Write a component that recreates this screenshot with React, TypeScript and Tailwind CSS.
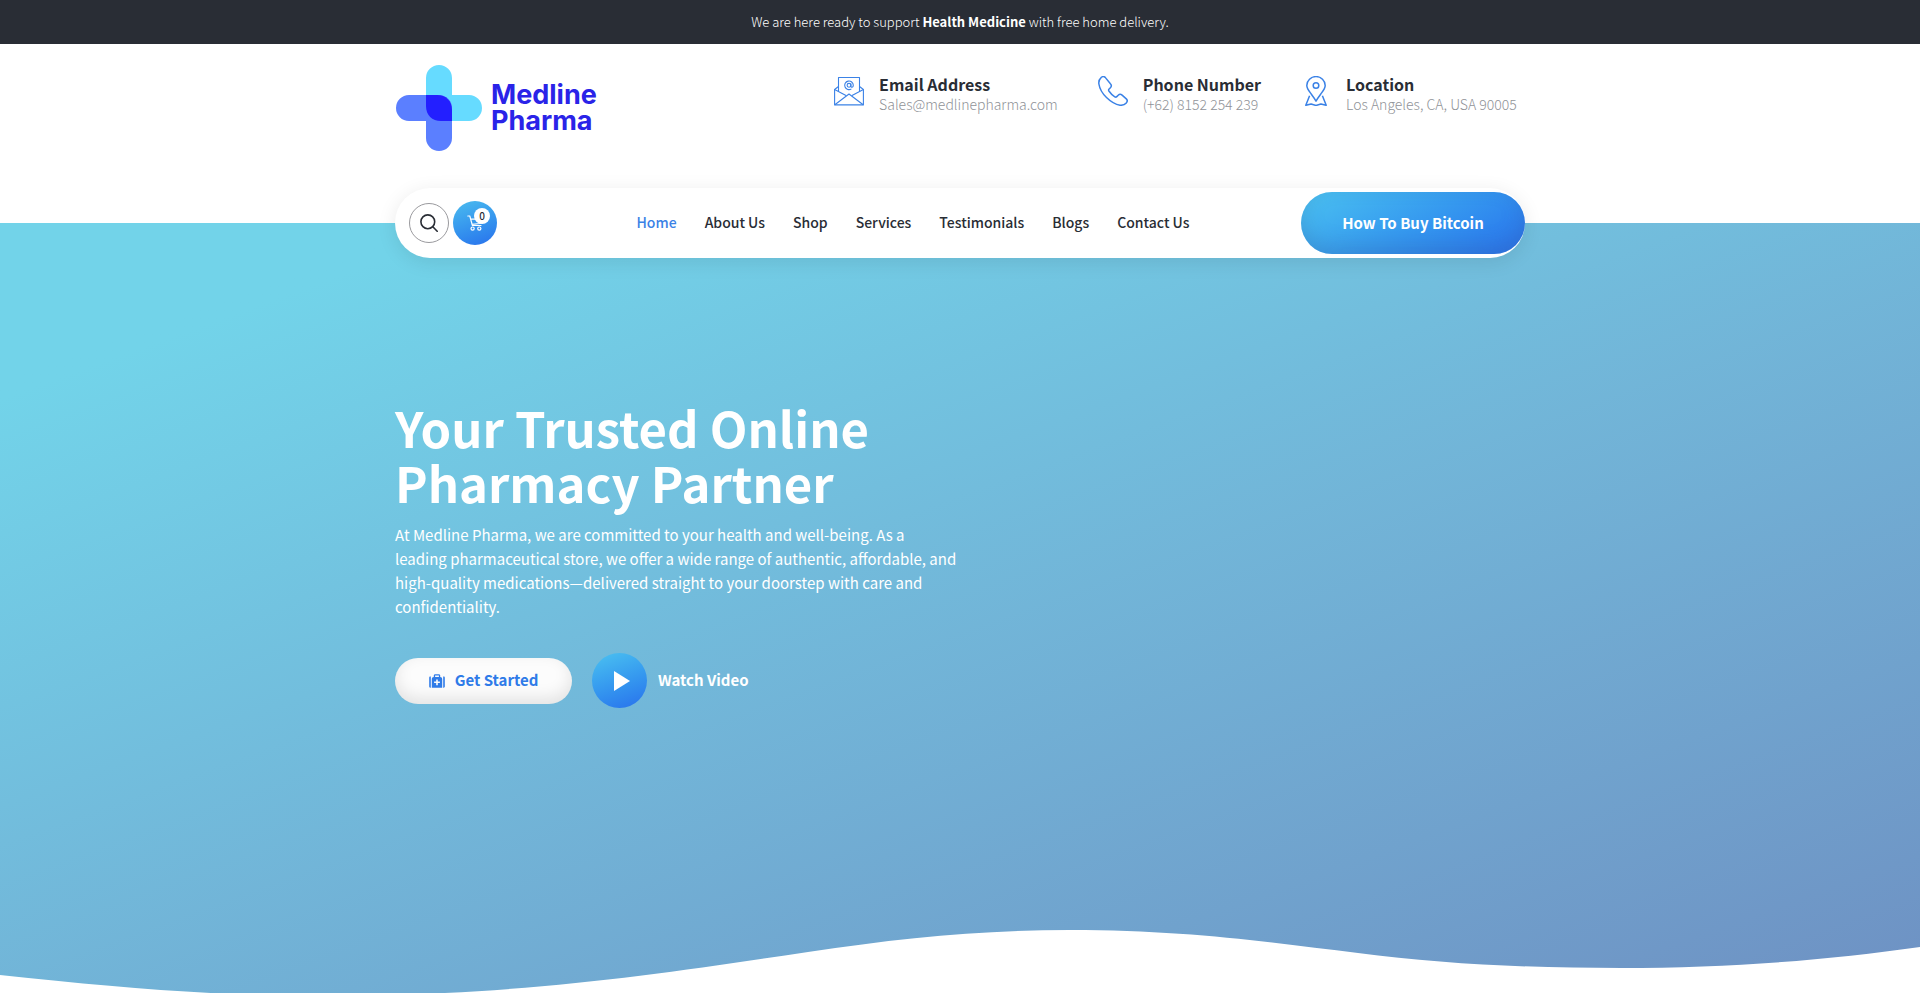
import type { ReactNode } from "react";

const navLinks = [
  "Home",
  "About Us",
  "Shop",
  "Services",
  "Testimonials",
  "Blogs",
  "Contact Us",
];

function MailIcon() {
  return (
    <svg viewBox="0 0 30 30" className="mt-0.5 size-[30px] shrink-0" fill="none" stroke="#3b82e6" strokeWidth="1.1" strokeLinejoin="round" aria-hidden="true">
      <path d="M4.5 15.5V1.5h21v14" />
      <path d="M4.5 10.5L.6 13.5v15.4h28.8V13.5l-3.9-3" />
      <path d="M.6 13.5L12 19.5M29.4 13.5L18 19.5M.8 28.7L15 18l14.2 10.7" />
      <circle cx="15" cy="9.3" r="1.9" />
      <path d="M16.9 7.4v2.6c0 1.9 2.4 1.6 2.4-.7a4.3 4.3 0 1 0-1.9 3.6" />
    </svg>
  );
}

function PhoneIcon() {
  return (
    <svg viewBox="0 0 30 30" className="mt-0.5 size-[30px] shrink-0" fill="none" stroke="#3b82e6" strokeWidth="1.5" strokeLinejoin="round" aria-hidden="true">
      <path d="M7.2 1.4C5.9.2 4.2.4 3.1 1.6 1.2 3.3.5 5.2.9 8c.7 4.6 3.5 9.5 7.6 13.5s9 7 13.5 7.7c2.6.3 4.6-.4 6.3-2.3 1.1-1.2 1.2-2.8 0-4l-4.2-3.8c-1.3-1.1-2.8-1-3.9.1l-1.4 1.4c-.6.6-1.3.7-2 .2-2.5-1.6-4.3-3.4-5.9-5.8-.5-.8-.4-1.4.2-2l1.3-1.3c1.2-1.2 1.1-2.7 0-3.9z" />
    </svg>
  );
}

function PinIcon() {
  return (
    <svg viewBox="0 0 30 30" className="mt-0.5 size-[30px] shrink-0" fill="none" stroke="#3b82e6" strokeWidth="1.5" strokeLinejoin="round" aria-hidden="true">
      <path d="M15 25.2c-1.8-3.4-3.6-5.6-5.6-8.3C7.4 14.2 5.8 12 5.8 9.4a9.2 8.8 0 0 1 18.4 0c0 2.6-1.6 4.8-3.6 7.5-2 2.7-3.8 4.9-5.6 8.3z" />
      <circle cx="15" cy="9.5" r="2.8" />
      <path d="M8.6 19.8L4.8 29.3l5.3-1.3 4.9 1.5 4.9-1.5 5.3 1.3-3.8-9.5" />
    </svg>
  );
}

function CartIcon() {
  return (
    <svg viewBox="0 0 16 16" className="size-4" fill="none" stroke="#fff" strokeWidth="1.2" strokeLinecap="round" strokeLinejoin="round" aria-hidden="true">
      <path d="M.8 1h2l2.6 9.5h8.6M3.7 4.2h11l-1.6 4.3-8.2.8" />
      <circle cx="5.6" cy="13.6" r="1.6" />
      <circle cx="12.3" cy="13.6" r="1.6" />
    </svg>
  );
}

function MedkitIcon() {
  return (
    <svg viewBox="0 0 16 14" className="h-3.5 w-4" fill="#2f7be8" aria-hidden="true">
      <path d="M1.8 2.5v11.3h-.6A1.1 1.1 0 0 1 .2 12.6V3.7c0-.7.5-1.2 1-1.2zM14.2 2.5v11.3h.6c.6 0 1-.5 1-1.2V3.7c0-.7-.4-1.2-1-1.2z" />
      <path
        fillRule="evenodd"
        d="M4.8 3V1.6C4.8.8 5.4.2 6.2.2h3.6c.8 0 1.4.6 1.4 1.4V3c1.2.1 2 .9 2 2v8.8H2.8V5c0-1.1.8-1.9 2-2zm1.3 0h3.8V1.5H6.1zM7.2 5.4v2.1H5.1v1.6h2.1v2.1h1.6V9.1h2.1V7.5H8.8V5.4z"
      />
    </svg>
  );
}

function Logo() {
  return (
    <a href="#home" className="flex items-center gap-2" aria-label="Medline Pharma">
      <svg viewBox="0 0 88 88" className="size-[88px]" aria-hidden="true">
        <path d="M31 14a13 13 0 0 1 26 0v17h17a13 13 0 0 1 0 26H44a13 13 0 0 1-13-13z" fill="#66dbff" />
        <path d="M14 31h30a13 13 0 0 1 13 13v30a13 13 0 0 1-26 0V57H14a13 13 0 0 1 0-26z" fill="#5b7fff" />
        <path d="M31 31h11c9 0 15 6 15 15v11H46c-9 0-15-6-15-15z" fill="#231fff" />
      </svg>
      <span className="font-['Inter'] text-[27px] leading-[26px] font-bold text-[#2a23e8]">
        <span className="block">Medline</span>
        <span className="block">Pharma</span>
      </span>
    </a>
  );
}

type ContactItemProps = {
  icon: ReactNode;
  title: string;
  text: string;
  className?: string;
};

function ContactItem({ icon, title, text, className = "" }: ContactItemProps) {
  return (
    <div className={`flex items-start gap-[15px] ${className}`}>
      {icon}
      <div>
        <p className="text-base leading-5 font-bold text-[#292d35]">{title}</p>
        <p className="text-sm leading-5 font-light text-[#909398]">{text}</p>
      </div>
    </div>
  );
}

export default function App() {
  return (
    <div className="flex min-h-screen flex-col bg-white font-['Noto_Sans_CJK_SC','Noto_Sans',sans-serif] text-[#292d35]">
      <div className="bg-[#292d35] py-3 text-center text-[13px] leading-5 font-light text-white">
        We are here ready to support <strong className="font-bold">Health Medicine</strong> with free home delivery.
      </div>

      <header className="relative z-10 mx-auto -mb-[35px] w-full max-w-[1130px]">
        <div className="flex items-start justify-between pt-5">
          <Logo />
          <div className="flex gap-10 pt-2.5">
            <ContactItem icon={<MailIcon />} title="Email Address" text="Sales@medlinepharma.com" />
            <ContactItem icon={<PhoneIcon />} title="Phone Number" text="(+62) 8152 254 239" />
            <ContactItem icon={<PinIcon />} title="Location" text="Los Angeles, CA, USA 90005" className="min-w-56" />
          </div>
        </div>

        <div className="mt-9 flex h-[70px] items-center rounded-[35px] bg-white pl-3.5 shadow-[0_4px_20px_rgba(0,0,0,0.09)]">
          <div className="flex items-center gap-1">
            <button type="button" aria-label="Search" className="flex size-10 items-center justify-center rounded-full border border-[#9a9a9e]">
              <svg viewBox="0 0 18 18" className="size-[18px]" fill="none" stroke="#292d35" strokeWidth="1.6" strokeLinecap="round" aria-hidden="true">
                <circle cx="7.8" cy="7.8" r="6.9" />
                <path d="M12.8 12.8l4.4 4.4" />
              </svg>
            </button>
            <button
              type="button"
              aria-label="Cart"
              className="relative flex size-11 items-center justify-center rounded-full bg-linear-160 from-[#4cbcee] to-[#2a70ec]"
            >
              <CartIcon />
              <span className="absolute top-[7px] right-[7px] flex size-4 items-center justify-center rounded-full bg-white text-[10px] leading-4 font-medium text-[#292d35]">
                0
              </span>
            </button>
          </div>

          <nav className="flex flex-1 justify-center gap-7 pb-0.5 pl-7 text-sm leading-5 font-medium">
            {navLinks.map((link, i) => (
              <a key={link} href="#" className={i === 0 ? "text-[#3b82e6]" : ""}>
                {link}
              </a>
            ))}
          </nav>

          <a
            href="#bitcoin"
            className="flex h-[62px] w-56 items-center justify-center rounded-full bg-linear-150 from-[#4cc2f0] to-[#2a70ec] text-[15px] font-bold text-white shadow-[inset_0_-8px_20px_rgba(50,90,150,0.25)]"
          >
            How To Buy Bitcoin
          </a>
        </div>
      </header>

      <main className="relative flex flex-1 flex-col bg-linear-160 from-[#72d3e9] from-12% to-[#6e91c3]">
        <section className="mx-auto w-full max-w-[1130px] pt-44 pb-56 text-white">
          <h1 className="text-[49px] leading-[55px] font-bold">
            <span className="block">Your Trusted Online</span>
            <span className="block">Pharmacy Partner</span>
          </h1>
          <p className="mt-3.5 max-w-[562px] text-[15px] leading-6">
            At Medline Pharma, we are committed to your health and well-being. As a
            leading pharmaceutical store, we offer a wide range of authentic, affordable, and
            high-quality medications—delivered straight to your doorstep with care and
            confidentiality.
          </p>
          <div className="mt-[34px] flex items-center gap-5 text-[15px] font-bold">
            <a
              href="#shop"
              className="flex h-[46px] w-[177px] items-center justify-center gap-2.5 rounded-full bg-[#fcfcfc] text-[#2f7be8] shadow-[inset_0_-6px_16px_rgba(0,0,0,0.1)]"
            >
              <MedkitIcon />
              Get Started
            </a>
            <button type="button" className="flex items-center gap-[11px]">
              <span className="flex size-[55px] items-center justify-center rounded-full bg-linear-160 from-[#4cc2f0] to-[#2a70ec]">
                <svg viewBox="0 0 16 20" className="ml-1 h-5 w-4" fill="#fff" aria-hidden="true">
                  <path d="M0 0l16 10L0 20z" />
                </svg>
              </span>
              Watch Video
            </button>
          </div>
        </section>

        <svg viewBox="0 930 1920 63" preserveAspectRatio="none" className="absolute inset-x-0 bottom-0 h-[63px] w-full" fill="#fff" aria-hidden="true">
          <path d="M0 975C120 988 220 996 320 996C520 996 660 974 808 952C900 938 980 930 1070 930C1190 930 1275 943 1358 953C1440 964 1530 968 1621 968C1730 968 1830 960 1920 947V1000H0z" />
        </svg>
      </main>
    </div>
  );
}
